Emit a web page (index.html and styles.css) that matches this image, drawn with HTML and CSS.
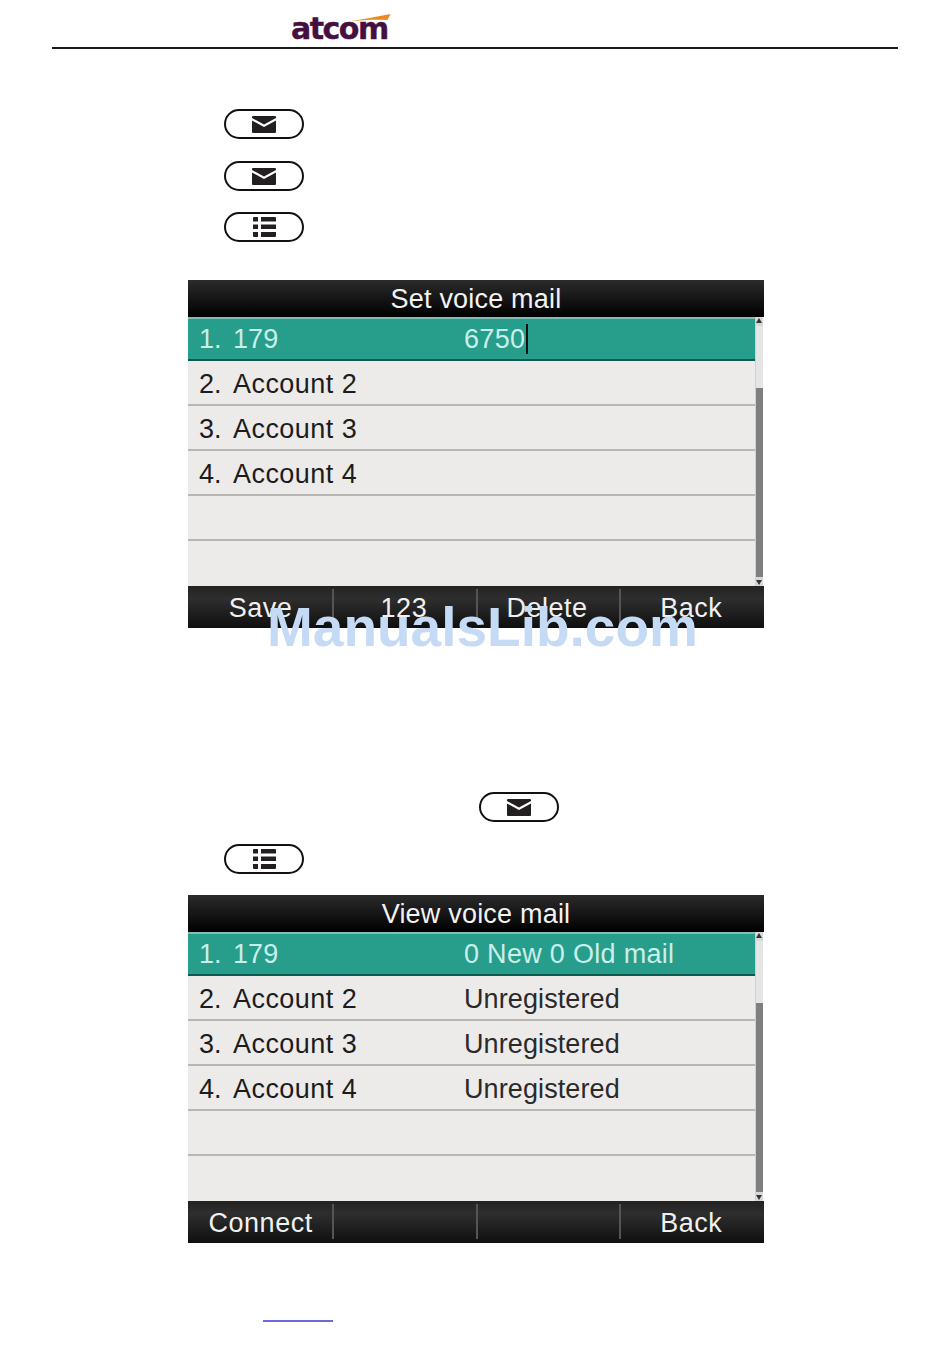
FILE: index.html
```html
<!DOCTYPE html>
<html lang="en">
<head>
<meta charset="utf-8">
<title>Voice mail</title>
<link rel="stylesheet" href="styles.css">
</head>
<body>
<svg class="defs" width="0" height="0" aria-hidden="true">
  <symbol id="mail" viewBox="0 0 24 17">
    <path d="M1 0H23Q24 0 24 1V2L12 8.500L0 2V1Q0 0 1 0Z"/>
    <path d="M0 4.500L12 11L24 4.500V16Q24 17 23 17H1Q0 17 0 16Z"/>
  </symbol>
  <symbol id="menu" viewBox="0 0 23 20">
    <path d="M1 0H5V4.500H0V1Q0 0 1 0ZM8 0H22Q23 0 23 1V4.500H8ZM0 7.500H5V12H0ZM8 7.500H23V12H8ZM0 15H5V20H1Q0 20 0 19ZM8 15H23V19Q23 20 22 20H8Z"/>
  </symbol>
</svg>
<main class="page">
  <header class="head">
    <div class="logo">
      <span class="logo-text">atcom</span>
      <svg class="swoosh" viewBox="0 0 42 8" aria-hidden="true"><path d="M0 7.500C14 5 28 3 42 0L39 6C26 5.500 12 6 0 7.500Z"/></svg>
    </div>
  </header>

  <div class="keys keys-first">
    <span class="key"><svg class="ico-mail"><use href="#mail"/></svg></span>
    <span class="key"><svg class="ico-mail"><use href="#mail"/></svg></span>
    <span class="key key-short"><svg class="ico-menu"><use href="#menu"/></svg></span>
  </div>

  <section class="phone phone-first">
    <div class="title">Set voice mail</div>
    <div class="body">
      <div class="rows">
        <div class="row active"><span class="name"><span class="num">1.</span>179</span><span class="val val-wide">6750<i class="caret"></i></span></div>
        <div class="row"><span class="name"><span class="num">2.</span><span class="acct">Account 2</span></span></div>
        <div class="row"><span class="name"><span class="num">3.</span><span class="acct">Account 3</span></span></div>
        <div class="row"><span class="name"><span class="num">4.</span><span class="acct">Account 4</span></span></div>
        <div class="row"></div>
        <div class="row last"></div>
      </div>
      <div class="scroll"><b class="arrow up"></b><span class="track"><span class="thumb"></span></span><b class="arrow down"></b></div>
    </div>
    <div class="soft">
      <span class="sk">Save</span><span class="sk">123</span><span class="sk">Delete</span><span class="sk">Back</span>
    </div>
    <div class="mark">ManualsLib.com</div>
  </section>

  <div class="keys keys-second">
    <span class="key key-shift"><svg class="ico-mail"><use href="#mail"/></svg></span>
    <span class="key"><svg class="ico-menu"><use href="#menu"/></svg></span>
  </div>

  <section class="phone phone-second">
    <div class="title">View voice mail</div>
    <div class="body">
      <div class="rows">
        <div class="row active"><span class="name"><span class="num">1.</span>179</span><span class="val val-wide">0 New 0 Old mail</span></div>
        <div class="row"><span class="name"><span class="num">2.</span><span class="acct">Account 2</span></span><span class="val">Unregistered</span></div>
        <div class="row"><span class="name"><span class="num">3.</span><span class="acct">Account 3</span></span><span class="val">Unregistered</span></div>
        <div class="row"><span class="name"><span class="num">4.</span><span class="acct">Account 4</span></span><span class="val">Unregistered</span></div>
        <div class="row"></div>
        <div class="row last"></div>
      </div>
      <div class="scroll"><b class="arrow up"></b><span class="track"><span class="thumb"></span></span><b class="arrow down"></b></div>
    </div>
    <div class="soft">
      <span class="sk">Connect</span><span class="sk"></span><span class="sk"></span><span class="sk">Back</span>
    </div>
  </section>

  <div class="link-line"></div>
</main>
</body>
</html>
```
FILE: styles.css
```css
* { box-sizing: border-box; }
html, body { margin: 0; padding: 0; background: #fff; }
body { font-family: "Liberation Sans", Arial, sans-serif; }
.defs { position: absolute; }
.page { width: 950px; height: 1360px; display: flex; flex-direction: column; overflow: hidden; }

.head { height: 49px; flex: none; margin: 0 52px; border-bottom: 2px solid #1a1a1a; padding-left: 239px; padding-top: 11px; }
.logo { position: relative; width: 100px; height: 30px; }
.logo-text { display: block; font-family: "DejaVu Sans", sans-serif; font-weight: 700; font-size: 30px; line-height: 36px; letter-spacing: -1.5px; color: #45103f; -webkit-text-stroke: 0.4px #45103f; }
.swoosh { position: absolute; left: 57px; top: 3px; width: 43px; height: 8px; fill: #e98b20; }

.keys { display: flex; flex-direction: column; align-items: flex-start; padding-left: 224px; flex: none; }
.keys-first { margin-top: 60px; gap: 22px; }
.keys-second { margin-top: 164px; gap: 22px; }
.key { display: flex; align-items: center; justify-content: center; width: 80px; height: 30px; flex: none; border: 2px solid #111; border-radius: 15px; background: #fff; }
.key-short { margin-top: -1px; }
.key-shift { margin-left: 255px; }
.ico-mail { width: 24px; height: 17px; fill: #231f20; }
.ico-menu { width: 23px; height: 20px; fill: #231f20; }

.phone { position: relative; width: 576px; height: 348px; flex: none; margin-left: 188px; display: flex; flex-direction: column; font-size: 27px; letter-spacing: 0.1px; }
.phone-first { margin-top: 38px; }
.phone-second { margin-top: 21px; }

.title { height: 37px; flex: none; background: linear-gradient(#2b2b2b, #000); color: #f2f2f2; text-align: center; line-height: 38px; letter-spacing: 0.2px; }
.body { height: 269px; flex: none; display: flex; background: #fff; }
.rows { flex: 1; display: flex; flex-direction: column; }
.row { height: 45px; flex: none; display: flex; align-items: center; color: #1c1c1c; background: #ecebea; border-bottom: 2px solid #b7b6b3; padding: 3px 0 0 11px; }
.row.last { border-bottom: 0; }
.row.active { height: 44px; padding-top: 0; background: #279d8c; color: #c9efe8; border-top: 2px solid #7dbfb4; border-bottom: 2px solid #0d5a50; }
.name { width: 265px; flex: none; white-space: pre; }
.num { display: inline-block; width: 34px; }
.acct { letter-spacing: 0.45px; }
.val { display: inline-flex; align-items: center; color: #2a2a2a; }
.row.active .val { color: #c9efe8; }
.val-wide { letter-spacing: 0.3px; }
.caret { display: inline-block; width: 2px; height: 30px; background: #111; margin-left: 1px; }

.scroll { width: 9px; flex: none; display: flex; flex-direction: column; background: #e5e5e5; border-left: 1px solid #d0d0d0; border-right: 1px solid #fff; }
.track { flex: 1; display: flex; flex-direction: column; justify-content: flex-end; }
.thumb { height: 189px; background: #7f7f7f; }
.arrow { height: 9px; flex: none; position: relative; background: #d8d8d8; }
.arrow::after { content: ""; position: absolute; left: 0; border-left: 3px solid transparent; border-right: 3px solid transparent; }
.arrow.up::after { top: 1px; border-bottom: 5px solid #333; }
.arrow.down::after { top: 3px; border-top: 5px solid #333; }

.soft { height: 42px; flex: none; display: flex; padding: 3px 0 4px 3px; background: linear-gradient(#222, #2e2e2e 30%, #0f0f0f); color: #f0f0f0; }
.sk { width: 144px; line-height: 38px; text-align: center; border-right: 2px solid #555; padding-right: 2px; letter-spacing: 0.5px; }
.sk:last-child { border-right: 0; }

.mark { position: absolute; left: 79px; top: 312px; font-size: 55px; line-height: 70px; font-weight: 700; color: #c5daf5; letter-spacing: 0; white-space: nowrap; }

.link-line { width: 70px; height: 2px; flex: none; margin: 77px 0 0 263px; background: #6a6ad8; }
```
